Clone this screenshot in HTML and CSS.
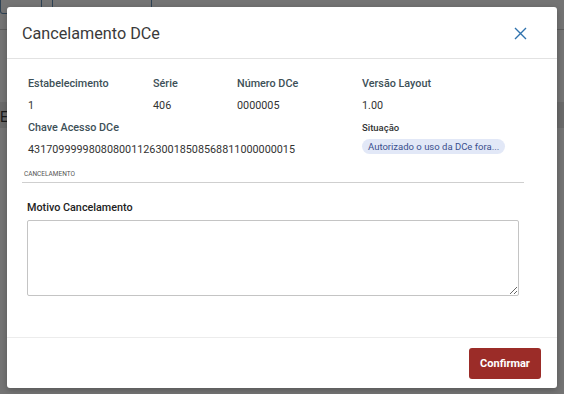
FILE: index.html
```html
<!DOCTYPE html>
<html lang="pt">
<head>
    <meta charset="UTF-8">
    <title>Cancelamento DCe</title>
    <link rel="stylesheet" href="styles.css">
</head>
<body>
    <div class="page">
        <div class="page-bar">
            <span class="page-tab"></span>
            <span class="page-tab wide"></span>
        </div>
        <div class="page-row"><span>Es</span></div>
    </div>
    <div class="overlay">
        <div class="modal">
            <div class="modal-head">
                <h1>Cancelamento DCe</h1>
                <span class="close">
                    <svg width="13" height="13" viewBox="0 0 13 13"><path d="M1 1L12 12M12 1L1 12" stroke="#2f72ad" stroke-width="1.4" fill="none"/></svg>
                </span>
            </div>
            <div class="modal-body">
                <div class="info">
                    <div class="field">
                        <div class="label">Estabelecimento</div>
                        <div class="value">1</div>
                    </div>
                    <div class="field">
                        <div class="label">Série</div>
                        <div class="value">406</div>
                    </div>
                    <div class="field">
                        <div class="label">Número DCe</div>
                        <div class="value">0000005</div>
                    </div>
                    <div class="field">
                        <div class="label">Versão Layout</div>
                        <div class="value">1.00</div>
                    </div>
                    <div class="field span3">
                        <div class="label">Chave Acesso DCe</div>
                        <div class="value">43170999998080800112630018508568811000000015</div>
                    </div>
                    <div class="field">
                        <div class="label small">Situação</div>
                        <div class="badge">Autorizado o uso da DCe fora...</div>
                    </div>
                </div>
                <div class="section">Cancelamento</div>
                <div class="motivo">
                    <label class="label dark">Motivo Cancelamento</label>
                    <textarea></textarea>
                </div>
            </div>
            <div class="modal-foot">
                <button class="btn">Confirmar</button>
            </div>
        </div>
    </div>
</body>
</html>
```

FILE: styles.css
```css
*{
    margin: 0;
    padding: 0;
    box-sizing: border-box;
}
body{
    width: 564px;
    height: 394px;
    overflow: hidden;
    font-family: Roboto, "Liberation Sans", sans-serif;
    background: #e9e9e9;
    position: relative;
}
.page .page-bar{
    height: 30px;
    display: flex;
    gap: 10px;
    border-bottom: 1px solid #bbb;
}
.page .page-tab{
    height: 14px;
    width: 42px;
    border: 1px solid #5c84a8;
    border-top: none;
    border-radius: 0 0 3px 3px;
}
.page .page-tab.wide{
    width: 100px;
}
.page .page-row{
    margin-top: 72px;
    height: 26px;
    background: #d5d5d5;
    font-size: 14px;
    line-height: 30px;
    color: #333;
}
.overlay{
    position: absolute;
    left: 0;
    top: 0;
    width: 100%;
    height: 100%;
    background: rgba(0,0,0,.5);
    padding: 7px 7px 0 7px;
}
.modal{
    background: #fff;
    border-radius: 3px;
    height: 381px;
    display: flex;
    flex-direction: column;
    box-shadow: 0 2px 6px rgba(0,0,0,.25);
}
.modal-head{
    height: 52px;
    display: flex;
    align-items: center;
    justify-content: space-between;
    padding: 0 30px 0 15px;
    border-bottom: 1px solid #e2e2e2;
}
.modal-head h1{
    font-size: 16.2px;
    font-weight: 400;
    color: #3a3a3a;
    margin-top: 1px;
}
.modal-head .close{
    display: flex;
    margin-top: 1px;
}
.modal-body{
    flex: 1;
    padding: 16px 33px 0 15px;
}
.info{
    display: grid;
    grid-template-columns: 125px 84px 125px 1fr;
    padding-left: 6px;
    row-gap: 5px;
}
.field.span3{
    grid-column: span 3;
}
.label{
    font-size: 10.8px;
    font-weight: 500;
    color: #3d5057;
    height: 17px;
    line-height: 17px;
}
.label.small{
    font-size: 9.5px;
    color: #333;
    height: 14px;
}
.value{
    margin-top: 5px;
    font-size: 10.8px;
    color: #333;
    height: 17px;
    line-height: 17px;
}
.badge{
    display: inline-block;
    margin-top: 6px;
    padding: 0 6px;
    height: 15px;
    line-height: 15px;
    border-radius: 8px;
    background: #e2e8f7;
    color: #3a4f8e;
    font-size: 9.5px;
    white-space: nowrap;
}
.section{
    margin-top: 12px;
    padding: 0 0 4px 2px;
    font-size: 6.5px;
    text-transform: uppercase;
    color: #555;
    border-bottom: 1px solid #cfcfcf;
}
.motivo{
    padding: 16px 0 0 5px;
}
.label.dark{
    display: block;
    color: #222;
}
.motivo textarea{
    display: block;
    margin-top: 4px;
    width: 492px;
    height: 76px;
    border: 1px solid #c4c4c4;
    border-radius: 2px;
    resize: vertical;
}
.modal-foot{
    height: 51px;
    border-top: 1px solid #ececec;
    display: flex;
    justify-content: flex-end;
    align-items: center;
    padding-right: 16px;
}
.btn{
    width: 72px;
    height: 31px;
    border: none;
    border-radius: 3px;
    background: #9b2c28;
    color: #fff;
    font-family: Roboto, "Liberation Sans", sans-serif;
    font-size: 11px;
    font-weight: 700;
}
```
